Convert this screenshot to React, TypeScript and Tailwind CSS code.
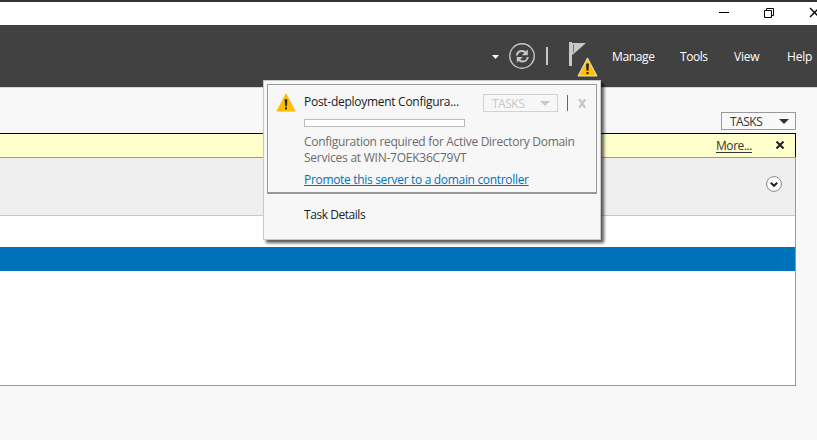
import React from 'react';

function Warning({ size = 20, outline = false }: { size?: number; outline?: boolean }) {
  return (
    <svg width={size} height={size} viewBox="0 0 20 20" className="block">
      <path
        d="M10 1.2 18.8 18H1.2Z"
        fill="#ffc000"
        stroke={outline ? '#e9d9b0' : '#ffb900'}
        strokeWidth="1.2"
        strokeLinejoin="round"
      />
      <path d="M8.9 6.5h2.2l-.4 6.4H9.3Z" fill="#1e1e1e" stroke="#1e1e1e" strokeWidth=".4" />
      <rect x="9" y="14.3" width="2" height="2.1" fill="#1e1e1e" />
    </svg>
  );
}

function TasksButton({ disabled = false }: { disabled?: boolean }) {
  return (
    <div
      className={
        disabled
          ? 'flex h-[18px] w-[75px] items-center justify-between border border-[#d2d2d2] pl-2 pr-[7px] text-[#c8c8c8]'
          : 'flex h-[18px] w-[75px] items-center justify-between border border-[#999] bg-[#f8f8f8] pl-2 pr-[6px] text-[#333]'
      }
    >
      <span className="relative top-px text-[12px] leading-4 tracking-[-0.5px]">TASKS</span>
      <svg width="10" height="5" viewBox="0 0 10 5">
        <path d="M0 0h10L5 5Z" fill="currentColor" />
      </svg>
    </div>
  );
}

function TitleBar() {
  return (
    <div className="flex h-[25px] w-[831px] items-center justify-end border-t-2 border-[#353334] bg-white pr-3">
      <svg width="102" height="12" viewBox="0 0 102 12" fill="none" stroke="#000" className="mb-[4px]">
        <path d="M2 6.5h10M47.500 4.500h7v7h-7zM49.500 4.500v-2h7v7h-2" />
        <path d="m93 2 9 9M93 11l9-9" strokeWidth="1.300" />
      </svg>
    </div>
  );
}

function Header() {
  return (
    <header className="flex h-[63px] border-b border-[#d5d5d5] bg-[#414141] text-white">
      <svg width="7" height="4" viewBox="0 0 7 4" className="ml-[492px] mt-[30px] shrink-0">
        <path d="M0 0h7L3.500 4Z" fill="#fff" />
      </svg>
      <svg width="27" height="27" viewBox="0 0 27 27" fill="none" className="ml-[10px] mt-[18px] shrink-0">
        <circle cx="13" cy="13" r="12.200" stroke="#c8c8c8" strokeWidth="1.400" />
        <path d="M7.800 12.500c.3-3.300 3-4.800 5.400-4.500 1.400.1 2.600.7 3.600 1.700" stroke="#c8c8c8" strokeWidth="2" />
        <path d="M18.800 6.500v5.800h-6Z" fill="#c8c8c8" />
        <path d="M18.800 14c-.4 3.200-3 4.600-5.400 4.400-1.400-.1-2.600-.7-3.600-1.700" stroke="#c8c8c8" strokeWidth="2" />
        <path d="M7.800 19.800V14h6Z" fill="#c8c8c8" />
      </svg>
      <div className="ml-[10px] mt-[22px] h-[18px] w-[2px] shrink-0 bg-[#c8c8c8]" />
      <div className="relative ml-[21px] mt-[17px] h-[36px] w-[30px] shrink-0">
        <svg width="18" height="24" viewBox="0 0 18 24" className="block">
          <path d="M0 0h3v24H0Z" fill="#c8c8c8" />
          <path d="M3 1h14L4 12.500H3Z" fill="#c8c8c8" />
          <path d="M4.500 2.500v8" stroke="#777" strokeWidth="1" />
        </svg>
        <div className="absolute left-[8px] top-[15px]">
          <Warning size={21} outline />
        </div>
      </div>
      <nav className="mt-[24px] flex text-[12px] leading-4">
        <span className="ml-[13px] w-[68px] tracking-[-0.35px]">Manage</span>
        <span className="w-[54px] tracking-[-0.45px]">Tools</span>
        <span className="w-[53px] tracking-[-0.2px]">View</span>
        <span className="tracking-[-0.2px]">Help</span>
      </nav>
    </header>
  );
}

function Notifications() {
  return (
    <div className="absolute left-[263px] top-[80px] h-[160px] w-[338px] border border-[#c8c8c8] bg-[#f7f7f7] p-[3px] shadow-[3px_3px_3px_0px_rgba(0,0,0,0.65)]">
      <div className="flex h-[110px] w-[330px] border border-b-2 border-[#999]">
        <div className="ml-[8px] mt-[8px] w-[28px] shrink-0">
          <Warning size={20} />
        </div>
        <div className="w-[284px] shrink-0">
          <div className="flex h-[34px] items-start pt-[9px]">
            <span className="w-[179px] text-[12px] leading-4 tracking-[-0.28px] text-[#222]">Post-deployment Configura...</span>
            <TasksButton disabled />
            <div className="ml-[9px] mt-[1px] h-[16px] w-px bg-[#666]" />
            <svg width="9" height="9" viewBox="0 0 9 9" className="ml-[10px] mt-[5px]" stroke="#c8c8c8" strokeWidth="2.300">
              <path d="m1.200 0 6 9M7.200 0l-6 9" />
            </svg>
          </div>
          <div className="h-[8px] w-[161px] border border-[#bbb] bg-white" />
          <p className="mt-[7px] whitespace-nowrap text-[12px] leading-4 text-[#6b6b6b]">
            <span className="block tracking-[-0.3px]">Configuration required for Active Directory Domain</span>
            <span className="block tracking-[-0.24px]">Services at WIN-7OEK36C79VT</span>
          </p>
          <a className="mt-[6px] block whitespace-nowrap text-[12px] leading-4 tracking-[-0.32px] text-[#0072bc] underline underline-offset-1">
            Promote this server to a domain controller
          </a>
        </div>
      </div>
      <div className="ml-[37px] mt-[13px] text-[12px] leading-4 tracking-[-0.45px] text-[#222]">Task Details</div>
    </div>
  );
}

export default function App() {
  return (
    <div className="relative h-[440px] w-[817px] overflow-hidden bg-[#f8f8f8] font-['Open_Sans','Noto_Sans',sans-serif]">
      <TitleBar />
      <Header />
      <main className="w-[796px]">
        <div className="flex h-[45px] justify-end pt-[24px]">
          <TasksButton />
        </div>
        <div className="flex h-[24px] items-center justify-end border-r border-t border-black bg-[#ffffcc] pr-[11px] text-[#333]">
          <span className="mr-[24px] text-[12px] leading-4 tracking-[-0.45px] underline underline-offset-2">More...</span>
          <svg width="8" height="8" viewBox="0 0 8 8" stroke="#222" strokeWidth="2" className="mb-[2px]">
            <path d="m.5.5 7 7M7.500.5l-7 7" />
          </svg>
        </div>
        <div className="h-[229px] border-b border-r border-t border-[#999] bg-white">
          <div className="flex h-[58px] justify-end border-b border-[#c8c8c8] bg-[#efefef] pr-[13px] pt-[18px]">
            <svg width="16" height="16" viewBox="0 0 16 16">
              <circle cx="8" cy="8" r="7.400" fill="#fff" stroke="#888" />
              <path d="m4.800 6.800 3.200 3 3.200-3" fill="none" stroke="#222" strokeWidth="2" />
            </svg>
          </div>
          <div className="mt-[31px] h-[24px] bg-[#0072bc]" />
        </div>
      </main>
      <Notifications />
    </div>
  );
}
